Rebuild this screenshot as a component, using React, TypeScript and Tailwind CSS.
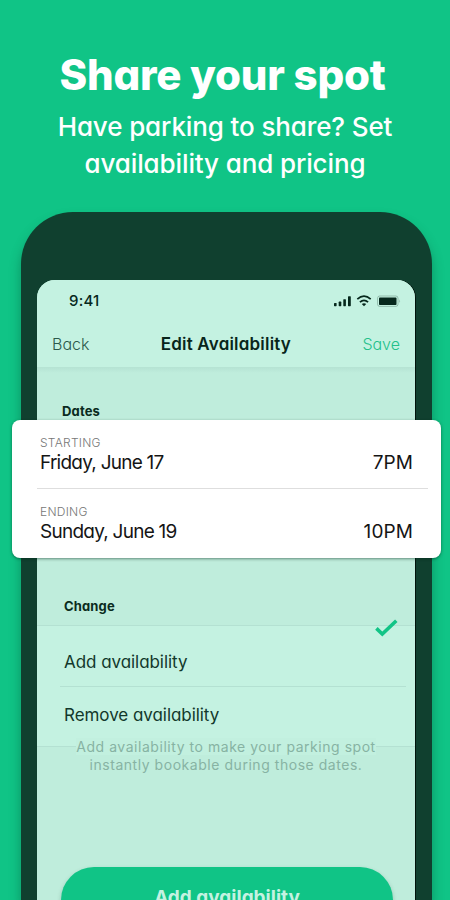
import type { ReactNode } from "react"

function StatusIcons() {
  return (
    <svg width="70" height="14" viewBox="0 0 70 14" fill="none" className="mb-[2px] text-[#06281c]">
      <g fill="currentColor">
        <rect x="0" y="9" width="2.6" height="3.2" rx="0.6" />
        <rect x="4.7" y="7.6" width="2.6" height="4.6" rx="0.6" />
        <rect x="9.3" y="5.2" width="2.6" height="7" rx="0.6" />
        <rect x="14" y="2.2" width="2.8" height="10" rx="0.6" />
      </g>
      <g stroke="currentColor" strokeWidth="1.7">
        <path d="M23.3 5.2 Q30 -0.8 36.7 5.2" />
        <path d="M25.9 8.2 Q30 4.4 34.1 8.2" />
      </g>
      <path d="M27.8 10 Q30 8.4 32.2 10 L30 12.3 Z" fill="currentColor" />
      <rect x="43.5" y="2" width="20.5" height="10.4" rx="2.2" stroke="currentColor" strokeOpacity="0.25" />
      <rect x="45" y="3.6" width="17.5" height="7.4" rx="0.8" fill="currentColor" />
      <path d="M65.3 5.3 Q67 7.2 65.3 9 Z" fill="currentColor" fillOpacity="0.3" />
    </svg>
  )
}

function DateRow({ label, date, time }: { label: string; date: string; time: string }) {
  return (
    <div className="flex h-[68px] flex-col pt-4">
      <span className="h-[15px] text-[12px] leading-[14px] font-light tracking-[0.25px] text-[#777]">{label}</span>
      <div className="flex justify-between pr-[15px] text-[19px] leading-6 tracking-[-0.75px] text-[#151515]">
        <span>{date}</span>
        <span className="tracking-[0.1px]">{time}</span>
      </div>
    </div>
  )
}

function SectionTitle({ children }: { children: ReactNode }) {
  return <h3 className="text-[13px] leading-4 font-bold tracking-[0.15px] text-[#0a2b20]">{children}</h3>
}

export default function App() {
  return (
    <main className="h-[900px] w-[450px] overflow-hidden bg-[#10c486] font-['Inter','Lato',sans-serif] [font-feature-settings:'cv11']">
      <header className="h-[212px] pt-[50px] text-center text-white">
        <h1 className="-ml-[5px] text-[42px] leading-[50px] font-extrabold tracking-[-0.25px] whitespace-nowrap">
          Share your spot
        </h1>
        <p className="mt-[8px] text-[26px] leading-[37px] font-medium tracking-[-0.12px] whitespace-nowrap">
          Have parking to share? Set
          <br />
          availability and pricing
        </p>
      </header>

      {/* phone frame */}
      <div className="ml-[21px] h-[688px] w-[411px] rounded-t-[52px] bg-[#10402f] pt-[68px] pl-4 shadow-[0_8px_12px_rgba(0,70,45,0.4)]">
        <div className="h-[620px] w-[378px] rounded-t-[18px] bg-[#bfeddc] shadow-[1px_0_0_#00140c]">
          <div className="h-[87px] rounded-t-[18px] bg-[#c4f2e1]">
            <div className="flex h-[43px] items-center justify-between pr-[11px] pl-8">
              <span className="text-[15px] font-medium tracking-[0.2px] text-[#06281c]">9:41</span>
              <StatusIcons />
            </div>
            <nav className="flex h-[42px] items-center justify-between px-[15px]">
              <span className="text-[16px] font-light text-[#2b594a]">Back</span>
              <h2 className="pt-px text-[17px] font-semibold tracking-[0.2px] text-[#08251a]">Edit Availability</h2>
              <span className="text-[16px] font-light text-[#22c08a]">Save</span>
            </nav>
          </div>
          <div className="h-[6px] bg-gradient-to-b from-[#b5e3d3] to-[#bfeddc]" />

          <div className="flex h-[47px] items-end pb-px pl-[25px]">
            <SectionTitle>Dates</SectionTitle>
          </div>

          {/* date card runs past both sides of the phone */}
          <section className="relative -mr-[26px] -ml-[25px] h-[138px] rounded-lg bg-white pr-[13px] pl-7 shadow-[0_1px_3px_rgba(0,40,25,0.5)]">
            <DateRow label="STARTING" date="Friday, June 17" time="7PM" />
            <div className="-ml-[3px] h-px bg-[#dedede]" />
            <DateRow label="ENDING" date="Sunday, June 19" time="10PM" />
          </section>

          <div className="h-[67px] pt-[40px] pl-[27px]">
            <SectionTitle>Change</SectionTitle>
          </div>

          <div className="h-[122px] border-y border-[#b4e1d2] bg-[#c4f2e1] pl-[27px]">
            <div className="relative -ml-[4px] mr-[9px] flex h-[61px] items-center border-b border-[#b4e1d2] pt-[14px] pl-[4px] text-[17px] tracking-[-0.05px] text-[#12382b]">
              Add availability
              <svg className="absolute -top-[8px] right-[7px]" width="26" height="22" viewBox="0 0 26 22" fill="none">
                <path d="M3.4 10.4 L9.3 16 L23.3 2.8" stroke="#12c486" strokeWidth="3.6" />
              </svg>
            </div>
            <div className="flex h-[57px] items-center text-[17px] tracking-[-0.05px] text-[#12382b]">
              Remove availability
            </div>
          </div>

          <p className="relative -mt-[9px] text-center text-[14px] leading-[18px] tracking-[0.54px] whitespace-nowrap text-[#87b3a3] [font-feature-settings:normal]">
            <span className="bg-[#c2f0df]">Add availability to make your parking spot</span>
            <br />
            instantly bookable during those dates.
          </p>

          <button className="mt-[93px] ml-6 flex h-[66px] w-[332px] items-start justify-center rounded-[36px] bg-[#10c486] pt-[17px] text-[19px] font-bold text-[#c4f2e1] shadow-[0_2px_4px_rgba(0,70,45,0.25)]">
            Add availability
          </button>
        </div>
      </div>
    </main>
  )
}
